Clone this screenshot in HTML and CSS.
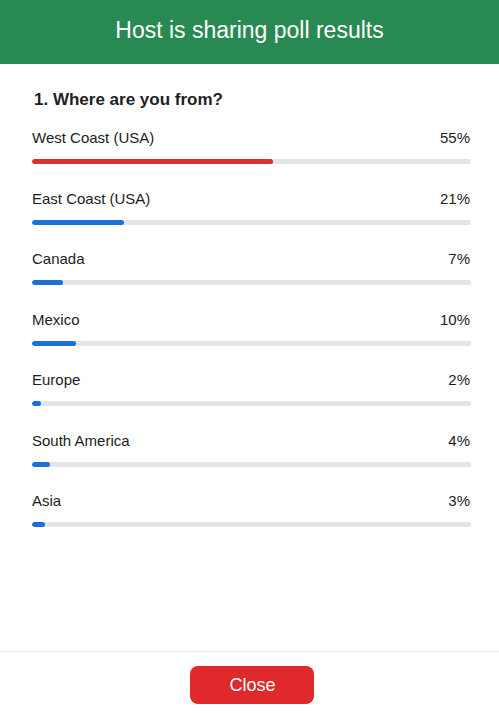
FILE: index.html
```html
<!DOCTYPE html>
<html>
<head>
<meta charset="utf-8">
<link rel="stylesheet" href="styles.css">
</head>
<body>
<div class="page">
  <header class="header">Host is sharing poll results</header>
  <main class="content">
    <h2 class="question">1. Where are you from?</h2>
    <ul class="answers">
      <li class="answer">
        <div class="row"><span>West Coast (USA)</span><span>55%</span></div>
        <div class="track"><div class="fill top" style="width:55%"></div></div>
      </li>
      <li class="answer">
        <div class="row"><span>East Coast (USA)</span><span>21%</span></div>
        <div class="track"><div class="fill" style="width:21%"></div></div>
      </li>
      <li class="answer">
        <div class="row"><span>Canada</span><span>7%</span></div>
        <div class="track"><div class="fill" style="width:7%"></div></div>
      </li>
      <li class="answer">
        <div class="row"><span>Mexico</span><span>10%</span></div>
        <div class="track"><div class="fill" style="width:10%"></div></div>
      </li>
      <li class="answer">
        <div class="row"><span>Europe</span><span>2%</span></div>
        <div class="track"><div class="fill" style="width:2%"></div></div>
      </li>
      <li class="answer">
        <div class="row"><span>South America</span><span>4%</span></div>
        <div class="track"><div class="fill" style="width:4%"></div></div>
      </li>
      <li class="answer">
        <div class="row"><span>Asia</span><span>3%</span></div>
        <div class="track"><div class="fill" style="width:3%"></div></div>
      </li>
    </ul>
  </main>
  <footer class="footer">
    <button class="close">Close</button>
  </footer>
</div>
</body>
</html>
```

FILE: styles.css
```css
* { box-sizing: border-box; }
html, body { margin: 0; padding: 0; background: #fff; }
body { font-family: "Liberation Sans", Arial, sans-serif; color: #1c1c1e; }
.page { display: flex; flex-direction: column; height: 713px; }
.header {
  height: 64px;
  background: #288a52;
  color: #fff;
  font-size: 23px;
  display: flex;
  align-items: center;
  justify-content: center;
  padding-bottom: 4px;
}
.content { flex: 1; padding: 26px 28px 0 32px; }
.question {
  margin: 0 0 19px 2px;
  font-size: 17px;
  line-height: 20px;
  font-weight: bold;
  color: #1e1e24;
}
.answers { list-style: none; margin: 0; padding: 0; display: flex; flex-direction: column; gap: 25.5px; }
.answer { display: flex; flex-direction: column; gap: 12px; }
.row { display: flex; justify-content: space-between; font-size: 15px; line-height: 18px; padding-right: 1px; }
.track { height: 5px; border-radius: 3px; background: #e5e5e8; overflow: hidden; }
.fill { height: 100%; border-radius: 3px; background: #1a6fd9; }
.fill.top { background: #dc2f2f; }
.footer {
  height: 62px;
  border-top: 1px solid #e8e8ea;
  display: flex;
  justify-content: center;
  padding: 14px 0 0 5px;
}
.close {
  width: 124px;
  height: 38px;
  border: none;
  border-radius: 8px;
  background: #e0292a;
  color: #fff;
  font-family: "Liberation Sans", Arial, sans-serif;
  font-size: 18px;
  padding: 0 0 0 1px;
}
```
